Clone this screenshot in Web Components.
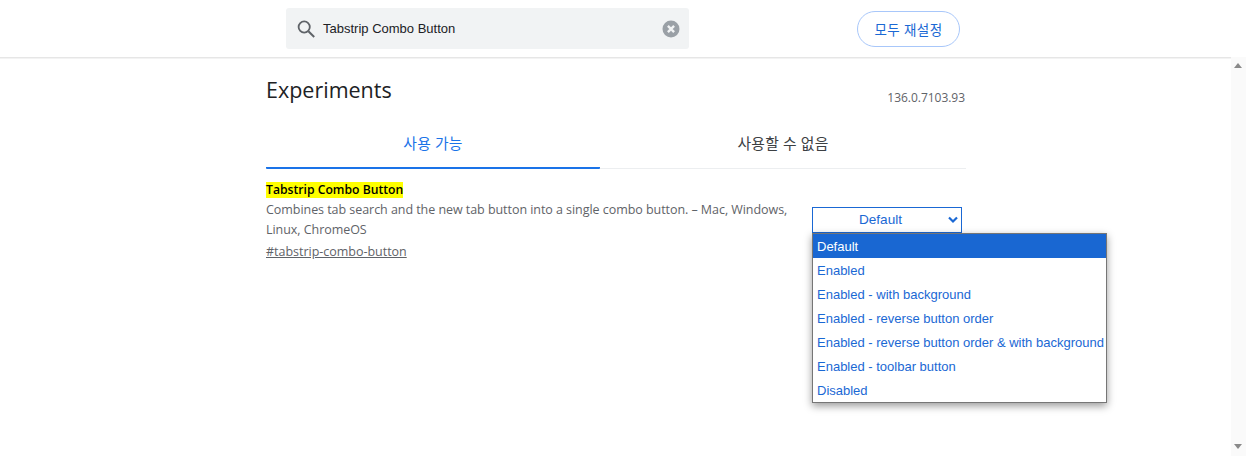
<!DOCTYPE html>
<html lang="ko"><head><meta charset="utf-8"><title>Experiments</title>
<style>html,body{margin:0;height:456px;overflow:hidden;background:#fff}</style></head>
<body><flags-app></flags-app>
<script>
const UI='"Open Sans","Noto Sans CJK KR",sans-serif';
const AR='"Liberation Sans","Noto Sans CJK KR",sans-serif';
function def(name,html){customElements.define(name,class extends HTMLElement{constructor(){super();this.attachShadow({mode:'open'}).innerHTML=html;}})}
def('search-box',`<style>:host{display:flex;align-items:center;box-sizing:border-box;width:403px;height:41px;background:#f1f3f4;border-radius:3px;padding:0 9px 0 11px;font:13px ${AR};color:#202124}
svg{display:block;flex:none}.t{flex:1;margin-left:8px}</style>
<svg width="18" height="18" viewBox="0 0 18 18" fill="none" stroke="#5f6368" stroke-width="1.8"><circle cx="7.2" cy="7" r="5.6"/><path d="M11.4 11.2 17.2 17" stroke-width="2"/></svg>
<span class="t"><slot></slot></span>
<svg width="18" height="18" viewBox="0 0 18 18"><circle cx="9" cy="9" r="8.5" fill="#9aa0a6"/><path d="M5.9 5.9l6.2 6.2M12.1 5.9l-6.2 6.2" stroke="#f1f3f4" stroke-width="2.4"/></svg>`);
def('reset-button',`<style>:host{display:flex;align-items:center;justify-content:center;box-sizing:border-box;width:103px;height:36px;border:1px solid #a8c7fa;border-radius:18px;color:#1a68d4;font:13.5px ${UI};letter-spacing:.4px}</style><slot></slot>`);
def('flags-header',`<style>:host{display:flex;box-sizing:border-box;padding:8px 0 0 286px;background:#fff;box-shadow:0 1px 0 #e6e6e6,0 2px 0 #f3f3f3;height:57px;align-items:flex-start}
.r{margin:3px 0 0 168px}</style><search-box>Tabstrip Combo Button</search-box><reset-button class="r">모두 재설정</reset-button>`);
def('page-title',`<style>:host{display:flex;justify-content:space-between;align-items:flex-start;height:52px}
h1{margin:16px 0 0;font:400 21.5px/34px ${UI};color:#202124}
span{margin:32px 1px 0 0;font:12px/18px ${UI};color:#5f6368;letter-spacing:-.03px}</style><h1><slot></slot></h1><span><slot name="v"></slot></span>`);
def('tab-item',`<style>:host{display:flex;flex:1 1 0;box-sizing:border-box;height:60px;justify-content:center;padding-top:24px;font:14.8px/20px ${UI};color:#3c4043;letter-spacing:.2px}
:host([active]){flex:0 0 334px;color:#1a73e8;border-bottom:2px solid #1a73e8;border-radius:0 0 1px 1px}</style><slot></slot>`);
def('tab-strip',`<style>:host{display:flex;height:60px;box-shadow:inset 0 -1px 0 #eceef0}</style><slot></slot>`);
def('feature-row',`<style>:host{display:flex;padding-top:13px;font:12.5px/18px ${UI};color:#5f6368}
.l{width:546px}
.t{margin:0;height:16px;line-height:16px;font-weight:600;color:#202124;font-size:12.2px}
mark{background:#ff0;color:#000;display:inline-block;height:16px}
.d{margin:2px 0 0;letter-spacing:-.05px;line-height:20px;width:530px}
a{display:inline-block;margin-top:2px;color:#5f6368;text-decoration:underline;line-height:20px;letter-spacing:-.02px}
.s{margin-top:25px}</style>
<div class="l"><p class="t"><mark><slot name="title"></slot></mark></p><p class="d"><slot name="desc"></slot></p><a><slot name="link"></slot></a></div>
<div class="s"><slot name="control"></slot></div>`);
def('select-box',`<style>:host{display:block;position:relative;box-sizing:border-box;width:150px;height:26px;border:1px solid #1a68d4;font:13.6px/24px ${AR};color:#1a68d4;text-align:center;padding-right:13px}
svg{position:absolute;right:3px;top:8px}
.pop{position:absolute;left:-1px;top:25px;box-sizing:border-box;width:295px;height:170px;border:1px solid #767676;background:#fff;box-shadow:0 3px 8px rgba(0,0,0,.4);text-align:left}</style>
<slot name="value"></slot><svg width="10" height="8" viewBox="0 0 10 8" fill="none" stroke="#1a68d4" stroke-width="2.2"><path d="M1 1.5l4 4 4-4"/></svg>
<div class="pop"><slot></slot></div>`);
def('select-option',`<style>:host{display:block;box-sizing:border-box;height:24px;padding:1px 0 0 4px;font:13px/24px ${AR};color:#1a68d4;white-space:nowrap}
:host([selected]){background:#1967d2;color:#fff}</style><slot></slot>`);
def('fake-scrollbar',`<style>:host{display:flex;flex-direction:column;justify-content:space-between;box-sizing:border-box;width:15px;height:399px;margin-top:57px;background:#fafafa;padding:6px 3px 7px}
i{display:block;width:0;height:0;border-left:4.5px solid transparent;border-right:4.5px solid transparent}
.u{border-bottom:5px solid #8a8a8a}.d{border-top:5px solid #8a8a8a}</style><i class="u"></i><i class="d"></i>`);
def('flags-app',`<style>:host{display:flex;width:1246px;height:456px;overflow:hidden;background:#fff}
.m{flex:0 0 1231px;width:1231px;display:block}
.c{width:700px;margin-left:266px}
</style><div class="m"><flags-header></flags-header><div class="c">
<page-title>Experiments<span slot="v">136.0.7103.93</span></page-title>
<tab-strip><tab-item active>사용 가능</tab-item><tab-item>사용할 수 없음</tab-item></tab-strip>
<feature-row><span slot="title">Tabstrip Combo Button</span>
<span slot="desc">Combines tab search and the new tab button into a single combo button. – Mac, Windows, Linux, ChromeOS</span>
<span slot="link">#tabstrip-combo-button</span>
<select-box slot="control"><span slot="value">Default</span>
<select-option selected>Default</select-option><select-option>Enabled</select-option><select-option>Enabled - with background</select-option><select-option>Enabled - reverse button order</select-option><select-option>Enabled - reverse button order &amp; with background</select-option><select-option>Enabled - toolbar button</select-option><select-option>Disabled</select-option></select-box>
</feature-row></div></div><fake-scrollbar></fake-scrollbar>`);
</script></body></html>
